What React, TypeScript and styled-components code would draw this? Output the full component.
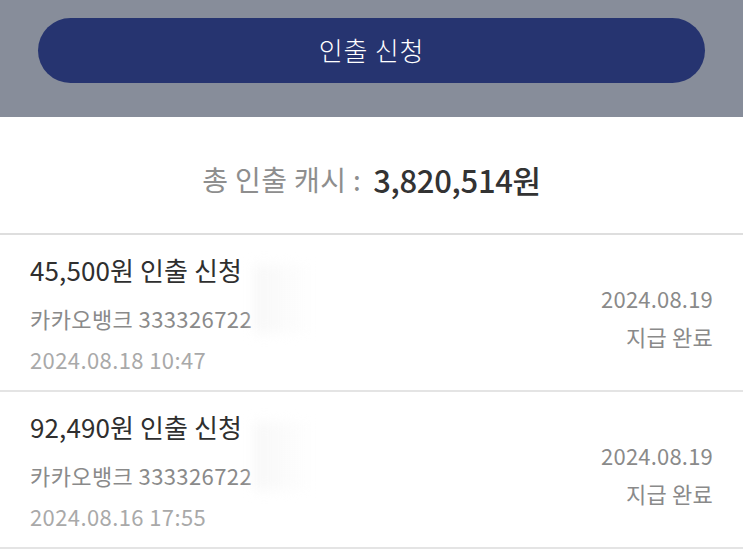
import React from 'react';
import styled, { createGlobalStyle } from 'styled-components';

const GlobalStyle = createGlobalStyle`
    html, body {
        margin: 0;
        padding: 0;
        background: #ffffff;
    }
    body {
        font-family: "Noto Sans CJK KR", "Noto Sans", sans-serif;
    }
`;

const Page = styled.div`
    width: 743px;
    min-height: 551px;
    background: #ffffff;
    overflow: hidden;
`;

const TopBar = styled.div`
    height: 117px;
    background: #878d9a;
    padding: 18px 38px 0;
    box-sizing: border-box;
`;

const RequestButton = styled.button`
    width: 100%;
    height: 65px;
    border: none;
    border-radius: 33px;
    background: #263470;
    color: #ffffff;
    font-family: inherit;
    font-size: 26px;
    font-weight: 300;
    letter-spacing: 0.8px;
    cursor: pointer;
    padding: 0 0 2px;
`;

const TotalRow = styled.div`
    height: 118px;
    display: flex;
    align-items: center;
    justify-content: center;
    padding-top: 8px;
    box-sizing: border-box;
    border-bottom: 2px solid #dedede;
`;

const TotalLabel = styled.span`
    color: #8e8e8e;
    font-size: 28px;
    letter-spacing: 0.4px;
`;

const TotalAmount = styled.span`
    color: #333333;
    font-size: 31px;
    font-weight: 500;
    letter-spacing: -0.3px;
    margin-left: 12px;
`;

const Row = styled.div`
    position: relative;
    display: flex;
    justify-content: space-between;
    align-items: center;
    padding: 20px 30px 16px;
    border-bottom: 2px solid #e4e4e4;
`;

const Left = styled.div`
    display: flex;
    flex-direction: column;
`;

const Title = styled.div`
    color: #2f2f2f;
    font-size: 26px;
    line-height: 30px;
    letter-spacing: 0.1px;
`;

const Line = styled.div<{ $tone: 'mid' | 'light'; $gap: number }>`
    color: ${(p) => (p.$tone === 'mid' ? '#8a8a8a' : '#a9a9a9')};
    font-size: 22px;
    line-height: 30px;
    margin-top: ${(p) => p.$gap}px;
    letter-spacing: 0.4px;
`;

const Right = styled.div`
    display: flex;
    flex-direction: column;
    align-items: flex-end;
    gap: 8px;
    margin-top: 4px;
`;

const RightText = styled.div`
    color: #8a8a8a;
    font-size: 22px;
    line-height: 30px;
    letter-spacing: 0.2px;
`;

const Smudge = styled.div`
    position: absolute;
    left: 254px;
    top: 30px;
    width: 60px;
    height: 68px;
    background: linear-gradient(to right, rgba(246, 246, 246, 0.85), rgba(255, 255, 255, 0));
    filter: blur(6px);
    pointer-events: none;
`;

interface Withdrawal {
    amount: string;
    account: string;
    requestedAt: string;
    paidOn: string;
    status: string;
}

const withdrawals: Withdrawal[] = [
    { amount: '45,500원', account: '카카오뱅크 333326722', requestedAt: '2024.08.18 10:47', paidOn: '2024.08.19', status: '지급 완료' },
    { amount: '92,490원', account: '카카오뱅크 333326722', requestedAt: '2024.08.16 17:55', paidOn: '2024.08.19', status: '지급 완료' },
];

export default function App() {
    return (
        <Page>
            <GlobalStyle />
            <TopBar>
                <RequestButton>인출 신청</RequestButton>
            </TopBar>
            <TotalRow>
                <TotalLabel>총 인출 캐시 :</TotalLabel>
                <TotalAmount>3,820,514원</TotalAmount>
            </TotalRow>
            {withdrawals.map((w) => (
                <Row key={w.requestedAt}>
                    <Left>
                        <Title>{w.amount} 인출 신청</Title>
                        <Line $tone="mid" $gap={18}>{w.account}</Line>
                        <Line $tone="light" $gap={11}>{w.requestedAt}</Line>
                    </Left>
                    <Right>
                        <RightText>{w.paidOn}</RightText>
                        <RightText>{w.status}</RightText>
                    </Right>
                    <Smudge />
                </Row>
            ))}
        </Page>
    );
}
